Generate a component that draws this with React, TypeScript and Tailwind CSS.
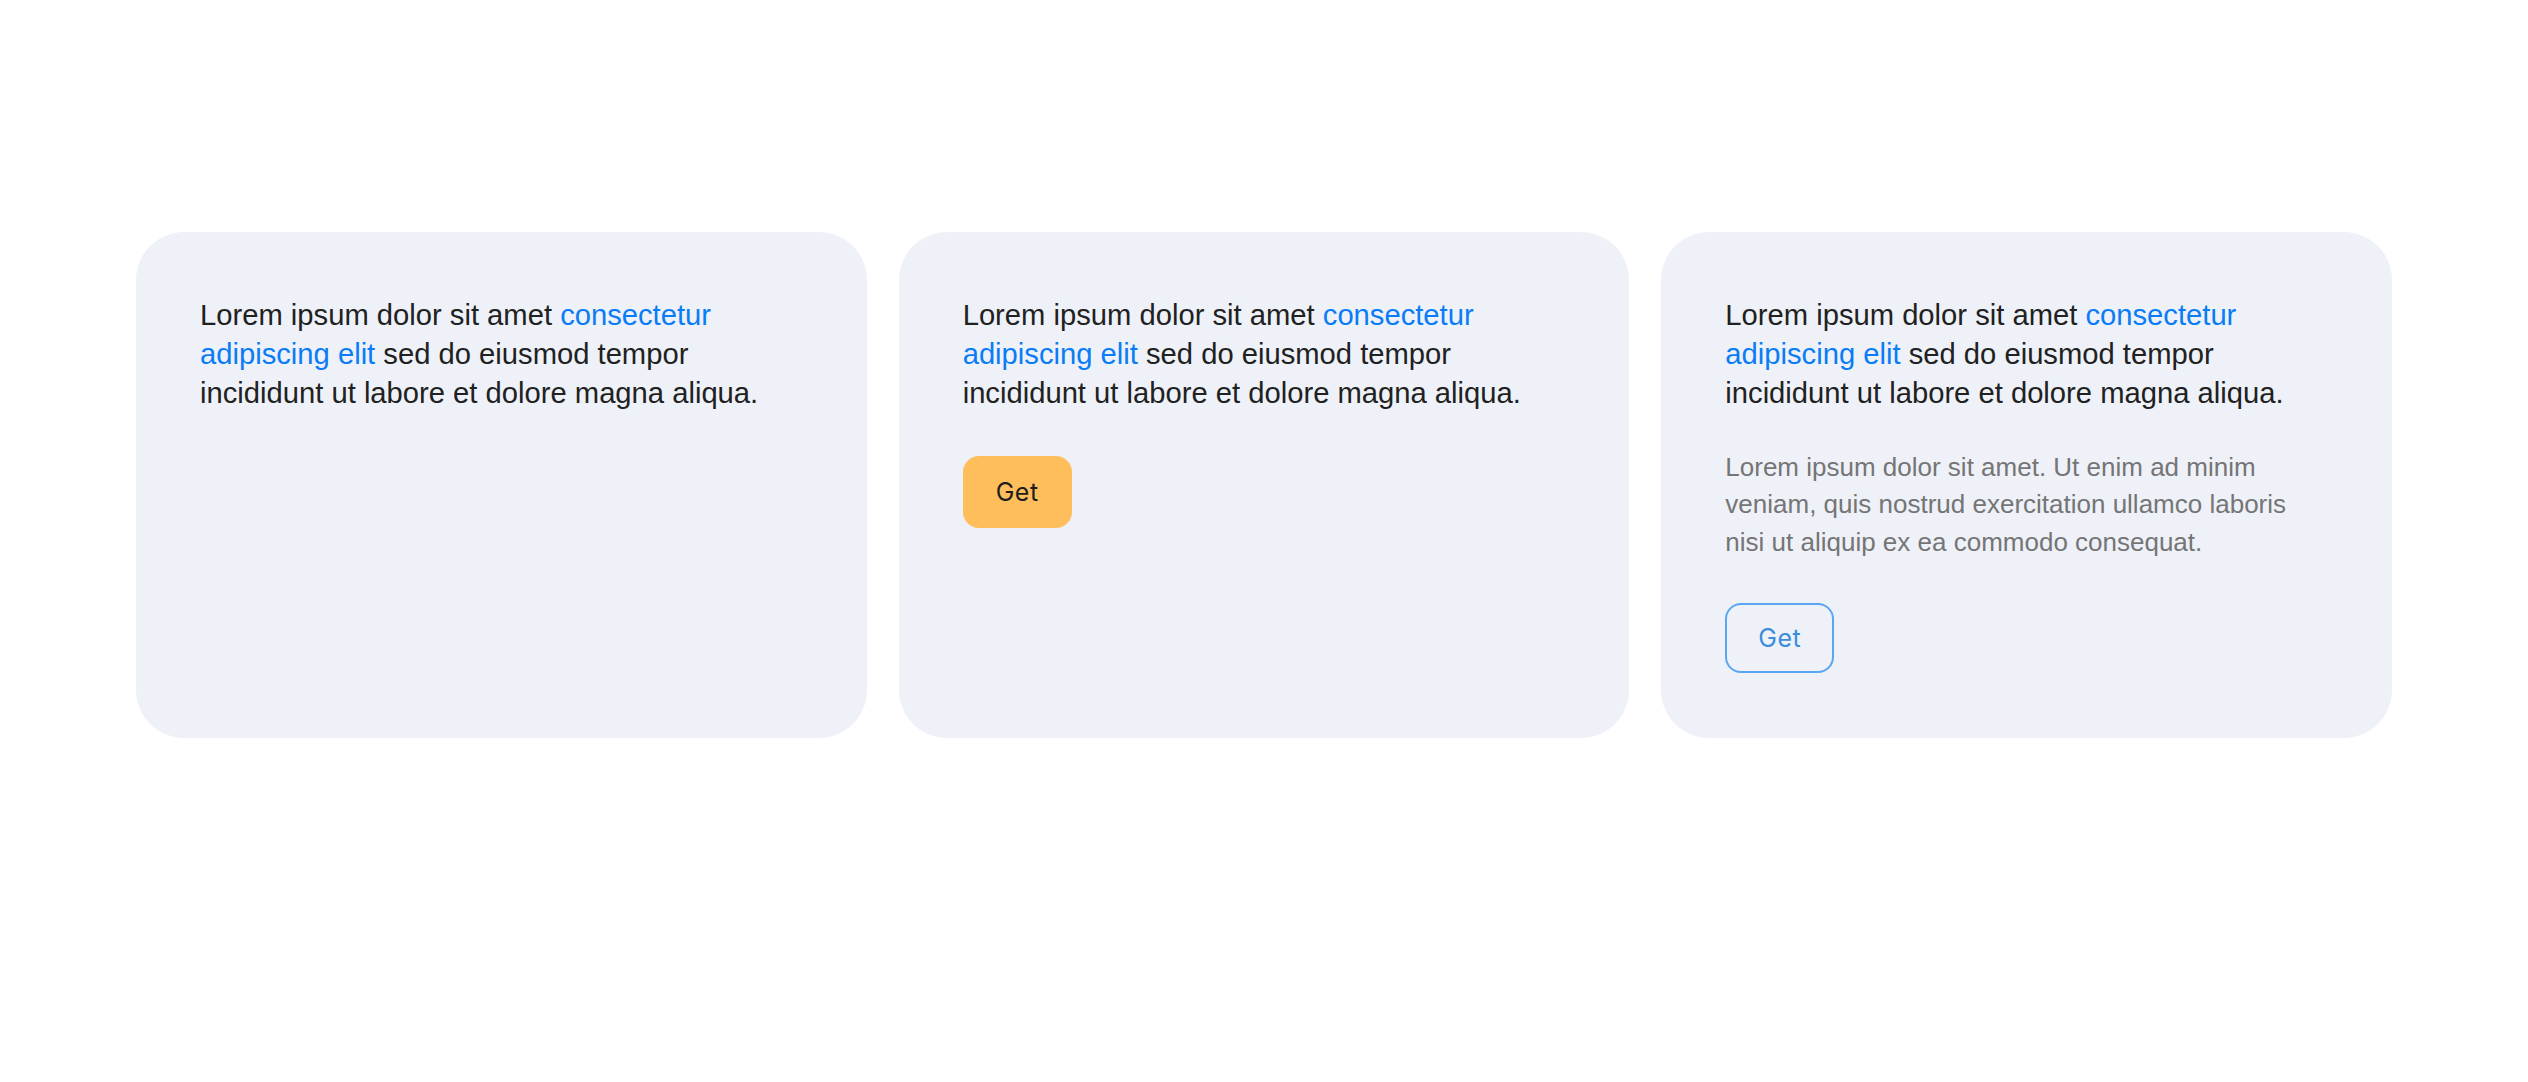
import React from "react";

const bodyFont = { fontFamily: '"Liberation Sans", Arial, sans-serif' };

const Lead: React.FC = () => (
  <p className="text-[29.2px] leading-[39.2px] text-[#212121]">
    Lorem ipsum dolor sit amet <span className="text-[#0a7cf5]">consectetur adipiscing elit</span> sed do
    eiusmod tempor incididunt ut labore et dolore magna aliqua.
  </p>
);

export default function App() {
  return (
    <div className="min-h-screen bg-white px-[136px] pt-[232px]" style={bodyFont}>
      <div className="grid grid-cols-3 gap-8">
        {/* plain */}
        <div className="rounded-[48px] bg-[#eef1f8] p-16">
          <Lead />
        </div>

        {/* with filled button */}
        <div className="rounded-[48px] bg-[#eef1f8] p-16">
          <Lead />
          <button
            type="button"
            className="mt-[42px] rounded-2xl bg-[#ffbe5c] px-[33px] py-5 text-[25px] leading-8 tracking-[0.02em] text-[#1d1d1d] font-['Inter',sans-serif]"
          >
            Get
          </button>
        </div>

        {/* with secondary text + outline button */}
        <div className="rounded-[48px] bg-[#eef1f8] p-16 pb-[65px]">
          <Lead />
          <p className="mt-[35px] pr-8 text-[26px] leading-[37.6px] text-[#757575]">
            Lorem ipsum dolor sit amet. Ut enim ad minim veniam, quis nostrud exercitation ullamco laboris nisi ut
            aliquip ex ea commodo consequat.
          </p>
          <button
            type="button"
            className="mt-[42px] rounded-2xl border-2 border-[#5aa6f2] px-[31px] py-[17px] text-[25px] leading-8 tracking-[0.02em] text-[#3a8ddc] font-['Inter',sans-serif]"
          >
            Get
          </button>
        </div>
      </div>
    </div>
  );
}
